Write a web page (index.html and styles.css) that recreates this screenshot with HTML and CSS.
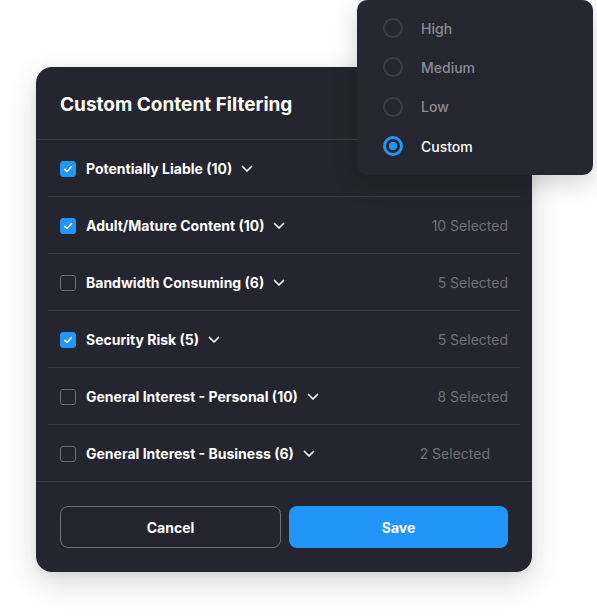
FILE: index.html
```html
<!DOCTYPE html>
<html>
<head>
<meta charset="utf-8">
<link rel="stylesheet" href="styles.css">
</head>
<body>
<div class="stage">
  <div class="card">
    <div class="card-header">Custom Content Filtering</div>
    <div class="rows">
      <div class="row">
        <span class="cb checked"><svg viewBox="0 0 16 16"><path d="M4.2 8.3l2.6 2.6 5-5.4" /></svg></span>
        <span class="label">Potentially Liable (10)</span>
        <svg class="chev" viewBox="0 0 12 8"><path d="M1.5 1.5l4.5 4.5 4.5-4.5"/></svg>
        <span class="count"></span>
      </div>
      <div class="row">
        <span class="cb checked"><svg viewBox="0 0 16 16"><path d="M4.2 8.3l2.6 2.6 5-5.4" /></svg></span>
        <span class="label">Adult/Mature Content (10)</span>
        <svg class="chev" viewBox="0 0 12 8"><path d="M1.5 1.5l4.5 4.5 4.5-4.5"/></svg>
        <span class="count">10 Selected</span>
      </div>
      <div class="row">
        <span class="cb"></span>
        <span class="label">Bandwidth Consuming (6)</span>
        <svg class="chev" viewBox="0 0 12 8"><path d="M1.5 1.5l4.5 4.5 4.5-4.5"/></svg>
        <span class="count">5 Selected</span>
      </div>
      <div class="row">
        <span class="cb checked"><svg viewBox="0 0 16 16"><path d="M4.2 8.3l2.6 2.6 5-5.4" /></svg></span>
        <span class="label">Security Risk (5)</span>
        <svg class="chev" viewBox="0 0 12 8"><path d="M1.5 1.5l4.5 4.5 4.5-4.5"/></svg>
        <span class="count">5 Selected</span>
      </div>
      <div class="row">
        <span class="cb"></span>
        <span class="label">General Interest - Personal (10)</span>
        <svg class="chev" viewBox="0 0 12 8"><path d="M1.5 1.5l4.5 4.5 4.5-4.5"/></svg>
        <span class="count">8 Selected</span>
      </div>
      <div class="row">
        <span class="cb"></span>
        <span class="label">General Interest - Business (6)</span>
        <svg class="chev" viewBox="0 0 12 8"><path d="M1.5 1.5l4.5 4.5 4.5-4.5"/></svg>
        <span class="count count-offset">2 Selected</span>
      </div>
    </div>
    <div class="footer">
      <button class="btn btn-cancel">Cancel</button>
      <button class="btn btn-save">Save</button>
    </div>
  </div>
  <div class="menu">
    <div class="opt"><span class="radio"></span><span>High</span></div>
    <div class="opt"><span class="radio"></span><span>Medium</span></div>
    <div class="opt"><span class="radio"></span><span>Low</span></div>
    <div class="opt opt-on"><span class="radio on"></span><span>Custom</span></div>
  </div>
</div>
</body>
</html>
```

FILE: styles.css
```css
* { box-sizing: border-box; }
html, body { margin: 0; padding: 0; background: #fff; }
body {
  font-family: Inter, "Noto Sans", sans-serif;
  width: 597px;
  height: 616px;
  overflow: hidden;
}
.stage {
  position: relative;
  padding: 67px 0 0 36px;
}
.card {
  width: 496px;
  height: 505px;
  background: #25252f;
  border-radius: 16px;
  box-shadow: 0 10px 30px rgba(0,0,0,0.16), 0 2px 8px rgba(0,0,0,0.06);
  display: flex;
  flex-direction: column;
}
.card-header {
  height: 73px;
  padding: 2px 24px 0;
  display: flex;
  align-items: center;
  color: #fff;
  font-weight: 700;
  font-size: 19px;
  letter-spacing: 0;
  border-bottom: 1px solid #393944;
}
.rows {
  padding: 0 12px;
}
.row {
  height: 57px;
  display: flex;
  align-items: center;
  padding: 1px 12px 0;
  border-bottom: 1px solid #393944;
}
.row:last-child { border-bottom: none; height: 56px; }
.cb {
  width: 16px;
  height: 16px;
  border-radius: 3px;
  border: 1.5px solid #6c6c75;
  flex: none;
  display: flex;
  align-items: center;
  justify-content: center;
}
.cb.checked {
  background: #2196f8;
  border-color: #2196f8;
}
.cb svg { width: 16px; height: 16px; fill: none; stroke: #fff; stroke-width: 1.8; stroke-linecap: round; stroke-linejoin: round; }
.label {
  margin-left: 10px;
  color: #fff;
  font-weight: 700;
  font-size: 14px;
  letter-spacing: 0;
}
.chev {
  width: 12px;
  height: 8px;
  margin-left: 9px;
  fill: none;
  stroke: #fff;
  stroke-width: 1.7;
  stroke-linecap: round;
  stroke-linejoin: round;
}
.count {
  margin-left: auto;
  color: #71717b;
  font-size: 14px;
}
.count-offset { margin-right: 18px; }
.footer {
  margin-top: auto;
  border-top: 1px solid #393944;
  padding: 24px 24px 24px;
  display: flex;
  gap: 8px;
}
.btn {
  flex: 1;
  height: 42px;
  border-radius: 8px;
  font-family: Inter, "Noto Sans", sans-serif;
  font-weight: 700;
  font-size: 14px;
  color: #fff;
  cursor: pointer;
}
.btn-cancel {
  background: transparent;
  border: 1px solid #6f6f78;
}
.btn-save {
  background: #2196f8;
  border: none;
}
.menu {
  position: absolute;
  top: 0;
  left: 357px;
  width: 236px;
  height: 175px;
  background: #262630;
  border-radius: 10px;
  box-shadow: 0 8px 24px rgba(0,0,0,0.18);
  padding: 8px 0 0 26px;
  display: flex;
  flex-direction: column;
}
.opt {
  height: 39.5px;
  display: flex;
  align-items: center;
  color: #8b8b93;
  font-size: 14px;
  font-weight: 500;
}
.opt:first-child { padding-top: 1px; }
.opt-on { color: #fff; }
.radio {
  width: 20px;
  height: 20px;
  border-radius: 50%;
  border: 2px solid #3d3d47;
  margin-right: 18px;
  flex: none;
}
.radio.on {
  border: 3px solid #2196f8;
  background: radial-gradient(circle, #2196f8 0 4px, transparent 4.5px);
}
```
